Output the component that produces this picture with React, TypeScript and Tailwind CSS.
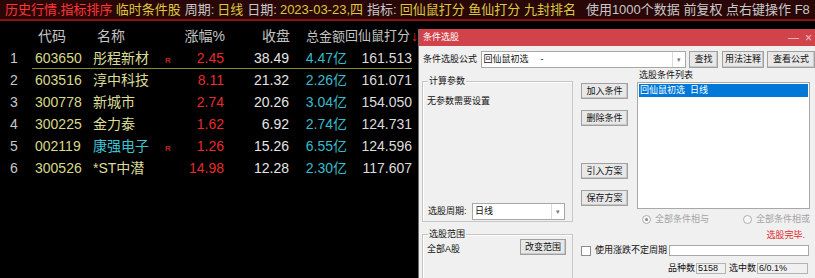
import React from "react";

type Row = {
  n: number;
  code: string;
  name: string;
  r?: boolean;
  cyan?: boolean;
  pct: string;
  close: string;
  amt: string;
  score: string;
};

const rows: Row[] = [
  { n: 1, code: "603650", name: "彤程新材", r: true, pct: "2.45", close: "38.49", amt: "4.47亿", score: "161.513" },
  { n: 2, code: "603516", name: "淳中科技", pct: "8.11", close: "21.32", amt: "2.26亿", score: "161.071" },
  { n: 3, code: "300778", name: "新城市", pct: "2.74", close: "20.26", amt: "3.04亿", score: "154.050" },
  { n: 4, code: "300225", name: "金力泰", pct: "1.62", close: "6.92", amt: "2.74亿", score: "124.731" },
  { n: 5, code: "002119", name: "康强电子", r: true, cyan: true, pct: "1.26", close: "15.26", amt: "6.55亿", score: "124.596" },
  { n: 6, code: "300526", name: "*ST中潜", pct: "14.98", close: "12.28", amt: "2.30亿", score: "117.607" },
];

function Btn({ children, className = "" }: { children: React.ReactNode; className?: string }) {
  return (
    <div
      className={`flex h-[16px] items-center justify-center border border-[#a0a0a0] bg-[#e8e8e8] text-[9px] leading-none text-[#111] shadow-[inset_-1px_-1px_0_#c8c8c8] ${className}`}
    >
      {children}
    </div>
  );
}

function Combo({ text, className = "" }: { text: React.ReactNode; className?: string }) {
  return (
    <div className={`flex h-[17px] items-center border border-[#a8a8a8] bg-white text-[9px] leading-none ${className}`}>
      <span className="flex-1 pl-[2px] whitespace-nowrap">{text}</span>
      <span className="flex h-full w-[13px] items-center justify-center border-l border-[#dcdcdc] text-[7px] text-[#777]">▾</span>
    </div>
  );
}

export default function App() {
  return (
    <div className="flex h-[278px] w-[815px] flex-col overflow-hidden bg-black font-['Liberation_Sans','Noto_Sans_CJK_SC',sans-serif]">
      {/* top status bar */}
      <div className="flex h-[21px] shrink-0 items-center whitespace-nowrap border-b-2 border-[#8c1212] bg-[#2a0707] pl-[5px] text-[13px] leading-none">
        <span className="text-[#ff3434]">历史行情.指标排序</span>
        <span className="ml-[3px] text-[#dcc840]">临时条件股</span>
        <span className="ml-[4px] text-[#c8c8c8]">周期:</span>
        <span className="ml-[3px] text-[#dcc840]">日线</span>
        <span className="ml-[4px] text-[#c8c8c8]">日期:</span>
        <span className="ml-[3px] text-[#dcc840]">2023-03-23,四</span>
        <span className="ml-[4px] text-[#c8c8c8]">指标:</span>
        <span className="ml-[3px] text-[#dcc840]">回仙鼠打分 鱼仙打分 九封排名</span>
        <span className="ml-[10px] text-[#c8c8c8]">使用1000个数据 前复权 点右键操作 F8</span>
      </div>

      <div className="flex min-h-0 flex-1">
        {/* result table */}
        <div className="w-[418px] shrink-0 pt-[4px] text-[14px] leading-none">
          <div className="flex h-[22px] items-center text-[#c4c4c4]">
            <div className="w-[32px]" />
            <div className="w-[61px] pl-[6px]">代码</div>
            <div className="w-[72px] pl-[4px]">名称</div>
            <div className="w-[10px]" />
            <div className="w-[50px] whitespace-nowrap text-right">涨幅%</div>
            <div className="w-[65px] text-right">收盘</div>
            <div className="w-[55px] whitespace-nowrap pl-[16px] text-[13px]">总金额</div>
            <div className="flex w-[71px] whitespace-nowrap text-[13px]">
              <span>回仙鼠打分</span>
              <span className="ml-[1px] text-[14px] text-[#ff2020]">↓</span>
            </div>
          </div>
          {rows.map((r) => (
            <div key={r.n} className="flex h-[22px] items-stretch">
              <div className="flex w-[32px] items-center pl-[10px] text-[#c8c8c8]">{r.n}</div>
              <div
                className={`flex w-[380px] items-center ${r.n === 1 ? "border-b border-[#8a8a2c]" : ""}`}
              >
                <div className="w-[61px] pl-[3px] text-[#d8d88a]">{r.code}</div>
                <div className={`w-[72px] whitespace-nowrap ${r.cyan ? "text-[#3cc4d4]" : "text-[#dcdc98]"}`}>{r.name}</div>
                <div className="w-[10px] pt-[6px] text-[8px] text-[#ff3030]">{r.r ? "R" : ""}</div>
                <div className="w-[49px] text-right text-[#e82a2a]">{r.pct}</div>
                <div className="w-[65px] text-right text-[#e6e6e6]">{r.close}</div>
                <div className="w-[58px] text-right text-[#38bccb]">{r.amt}</div>
                <div className="w-[65px] text-right text-[#dcdcdc]">{r.score}</div>
              </div>
            </div>
          ))}
        </div>

        {/* condition stock picker dialog */}
        <div className="mt-[8px] flex min-w-0 flex-1 flex-col border-l border-[#6c6c6c] text-[9px] leading-none text-[#111]">
          <div className="flex h-[17px] shrink-0 items-center bg-[#d1434b] pl-[4px] text-white">
            <span>条件选股</span>
            <span className="ml-auto text-[11px] text-white/70">—</span>
            <span className="ml-[6px] mr-[3px] text-[12px] text-white/70">×</span>
          </div>

          <div className="flex flex-1 flex-col bg-[#f0f0f0]">
            {/* formula row */}
            <div className="mt-[4px] flex h-[18px] items-center pl-[4px]">
              <span className="w-[58px] whitespace-nowrap">条件选股公式</span>
              <Combo
                className="w-[207px]"
                text={
                  <>
                    回仙鼠初选<span className="ml-[12px]">-</span>
                  </>
                }
              />
              <Btn className="ml-[3px] h-[17px] w-[29px] shrink-0">查找</Btn>
              <Btn className="ml-[4px] h-[17px] w-[42px] shrink-0">用法注释</Btn>
              <Btn className="ml-[3px] h-[17px] w-[48px] shrink-0">查看公式</Btn>
            </div>

            <div className="flex pl-[3px]">
              {/* left column: groups */}
              <div className="w-[151px] shrink-0">
                <div className="relative mt-[13px] flex h-[141px] flex-col justify-between border border-[#c6c6c6] shadow-[inset_1px_1px_0_#ffffff]">
                  <span className="absolute -top-[6px] left-[5px] bg-[#f0f0f0] px-[1px] leading-[11px]">计算参数</span>
                  <div className="pl-[4px] pt-[15px]">无参数需要设置</div>
                  <div className="flex items-center pb-[1px] pl-[5px]">
                    <span className="w-[44px] whitespace-nowrap">选股周期:</span>
                    <Combo className="w-[93px]" text="日线" />
                  </div>
                </div>
                <div className="relative mt-[12px] h-[60px] border border-[#c6c6c6] shadow-[inset_1px_1px_0_#ffffff]">
                  <span className="absolute -top-[6px] left-[5px] bg-[#f0f0f0] px-[1px] leading-[11px]">选股范围</span>
                  <div className="flex items-center pl-[4px] pr-[6px] pt-[4px]">
                    <span className="mt-[4px]">全部A股</span>
                    <Btn className="ml-auto w-[46px]">改变范围</Btn>
                  </div>
                </div>
              </div>

              {/* right part */}
              <div className="ml-[8px] flex min-w-0 flex-1 flex-col">
                <div className="flex">
                  <div className="flex w-[47px] shrink-0 flex-col">
                    <Btn className="mt-[15px]">加入条件</Btn>
                    <Btn className="mt-[11px]">删除条件</Btn>
                    <Btn className="mt-[37px]">引入方案</Btn>
                    <Btn className="mt-[11px]">保存方案</Btn>
                  </div>
                  <div className="ml-[9px] flex w-[173px] shrink-0 flex-col">
                    <div className="h-[14px] pl-[2px] leading-[14px]">选股条件列表</div>
                    <div className="h-[127px] border border-[#a8a8a8] bg-white p-[1px]">
                      <div className="flex h-[13px] items-center bg-[#0078d7] pl-[1px] whitespace-nowrap text-white">
                        回仙鼠初选<span className="ml-[5px]">日线</span>
                      </div>
                    </div>
                    <div className="mt-[4px] flex h-[12px] items-center pl-[5px] text-[#a4a4a4]">
                      <div className="flex w-[103px] items-center">
                        <span className="flex h-[9px] w-[9px] items-center justify-center rounded-full border border-[#b0b0b0] bg-[#f6f6f6]">
                          <span className="h-[3px] w-[3px] rounded-full bg-[#8a8a8a]" />
                        </span>
                        <span className="ml-[4px]">全部条件相与</span>
                      </div>
                      <span className="h-[9px] w-[9px] rounded-full border border-[#b0b0b0] bg-[#f6f6f6]" />
                      <span className="ml-[4px] whitespace-nowrap">全部条件相或</span>
                    </div>
                    <div className="mt-[6px] h-[12px] pr-[5px] text-right text-[#e02828]">选股完毕.</div>
                  </div>
                </div>

                <div className="mt-[2px] flex h-[11px] items-center">
                  <span className="h-[10px] w-[10px] shrink-0 border border-[#8c8c8c] bg-white" />
                  <span className="ml-[4px] w-[74px] shrink-0 whitespace-nowrap">使用涨跌不定周期</span>
                  <span className="h-[11px] w-[140px] shrink-0 border border-[#a8a8a8] bg-white" />
                </div>

                <div className="mt-[7px] flex h-[11px] items-center pl-[87px]">
                  <span className="w-[28px] shrink-0 whitespace-nowrap">品种数</span>
                  <span className="flex h-[11px] w-[30px] shrink-0 items-center border border-[#b4b4b4] pl-[1px]">5158</span>
                  <span className="ml-[3px] w-[28px] shrink-0 whitespace-nowrap">选中数</span>
                  <span className="flex h-[11px] w-[51px] shrink-0 items-center border border-[#b4b4b4] pl-[1px]">6/0.1%</span>
                </div>
              </div>
            </div>
          </div>
        </div>
      </div>
    </div>
  );
}
